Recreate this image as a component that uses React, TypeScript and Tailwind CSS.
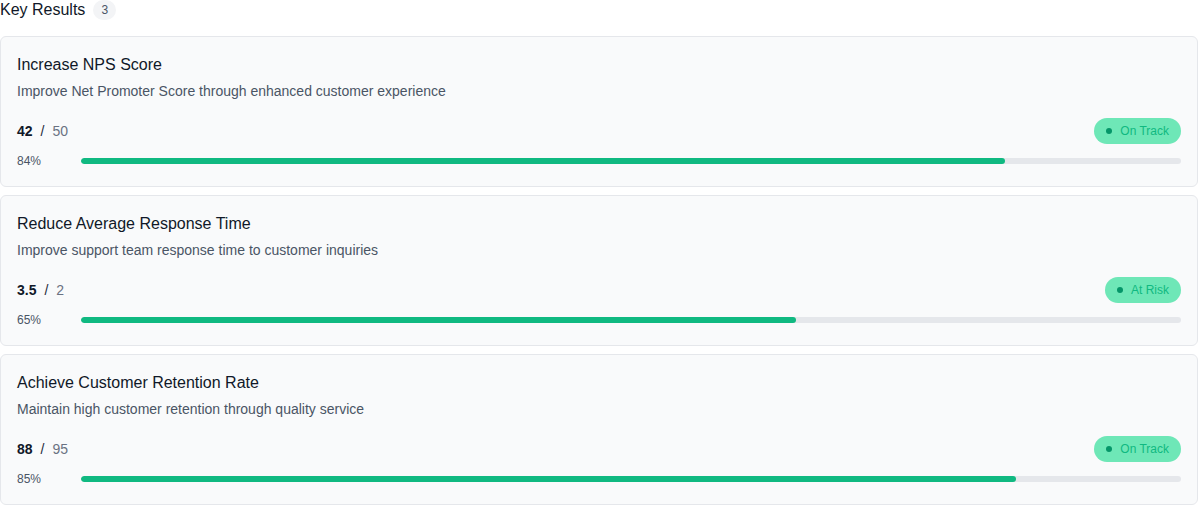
import React from "react";

type KR = {
  title: string;
  desc: string;
  current: string;
  target: string;
  pct: number;
  status: string;
};

const items: KR[] = [
  { title: "Increase NPS Score", desc: "Improve Net Promoter Score through enhanced customer experience", current: "42", target: "50", pct: 84, status: "On Track" },
  { title: "Reduce Average Response Time", desc: "Improve support team response time to customer inquiries", current: "3.5", target: "2", pct: 65, status: "At Risk" },
  { title: "Achieve Customer Retention Rate", desc: "Maintain high customer retention through quality service", current: "88", target: "95", pct: 85, status: "On Track" },
];

export default function App() {
  return (
    <div className="w-[1198px] bg-white text-gray-900" style={{ fontFamily: '"Liberation Sans", Arial, sans-serif' }}>
      <div className="flex items-center gap-2 h-5 mb-4">
        <h2 className="text-base leading-5 text-gray-900">Key Results</h2>
        <span className="rounded-full bg-gray-100 text-gray-600 text-xs h-5 px-2 flex items-center">3</span>
      </div>
      <div className="flex flex-col gap-2">
        {items.map((kr) => (
          <div key={kr.title} className="rounded-md border border-gray-200 bg-gray-50 p-4">
            <div className="text-base leading-6 text-gray-900">{kr.title}</div>
            <div className="mt-1 text-sm leading-5 text-gray-600">{kr.desc}</div>
            <div className="mt-4 flex items-center justify-between h-7">
              <div className="text-sm leading-5">
                <span className="font-bold text-gray-900">{kr.current}</span>
                <span className="mx-2 text-gray-800">/</span>
                <span className="text-gray-500">{kr.target}</span>
              </div>
              <span className="flex items-center gap-2 rounded-full bg-[#6ee7b7] text-[#10b981] text-xs h-[26px] px-3">
                <span className="w-1.5 h-1.5 rounded-full bg-[#059669]" />
                {kr.status}
              </span>
            </div>
            <div className="mt-1.5 flex items-center gap-4 h-[19px]">
              <span className="w-12 text-xs leading-4 text-gray-600">{kr.pct}%</span>
              <div className="flex-1 h-1.5 rounded-full bg-gray-200 overflow-hidden">
                <div className="h-full rounded-full bg-[#10b981]" style={{ width: `${kr.pct}%` }} />
              </div>
            </div>
          </div>
        ))}
      </div>
    </div>
  );
}
